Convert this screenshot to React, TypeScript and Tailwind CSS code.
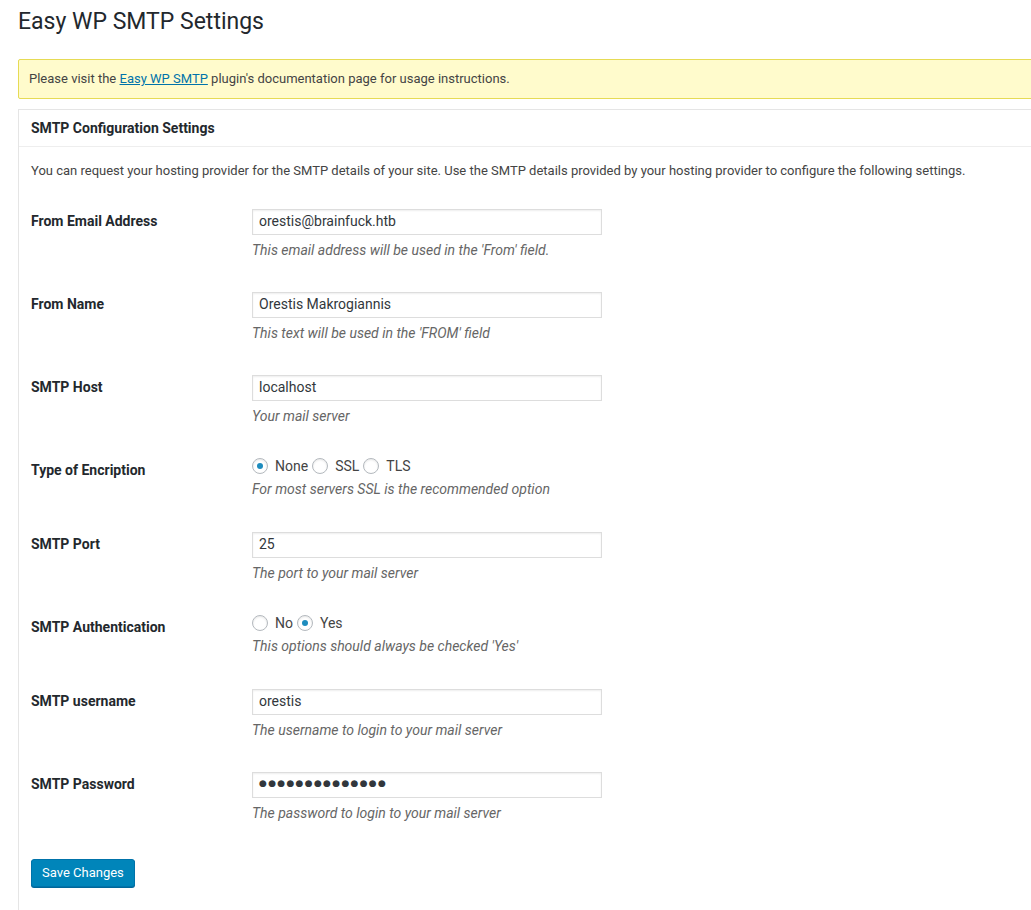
import React from "react";

type Field =
  | { kind: "text"; label: string; value: string; help: string; password?: boolean }
  | { kind: "radio"; label: string; options: string[]; checked: string; help: string };

const fields: Field[] = [
  { kind: "text", label: "From Email Address", value: "orestis@brainfuck.htb", help: "This email address will be used in the 'From' field." },
  { kind: "text", label: "From Name", value: "Orestis Makrogiannis", help: "This text will be used in the 'FROM' field" },
  { kind: "text", label: "SMTP Host", value: "localhost", help: "Your mail server" },
  { kind: "radio", label: "Type of Encription", options: ["None", "SSL", "TLS"], checked: "None", help: "For most servers SSL is the recommended option" },
  { kind: "text", label: "SMTP Port", value: "25", help: "The port to your mail server" },
  { kind: "radio", label: "SMTP Authentication", options: ["No", "Yes"], checked: "Yes", help: "This options should always be checked 'Yes'" },
  { kind: "text", label: "SMTP username", value: "orestis", help: "The username to login to your mail server" },
  { kind: "text", label: "SMTP Password", value: "●●●●●●●●●●●●●●", help: "The password to login to your mail server", password: true },
];

function Radio({ on }: { on: boolean }) {
  return (
    <span className="flex h-4 w-4 shrink-0 items-center justify-center rounded-full border border-[#b4b9be] bg-white shadow-[inset_0_1px_2px_rgba(0,0,0,0.1)]">
      {on && <span className="h-[6px] w-[6px] rounded-full bg-[#1e8cbe]" />}
    </span>
  );
}

function Row({ field }: { field: Field }) {
  const tall = field.kind === "text";
  return (
    <div className={`flex ${tall ? "h-[83px]" : "h-[74px]"}`}>
      <div className="w-[221px] shrink-0 pt-[17px] text-[14px] font-bold leading-[18px] text-[#23282d]">
        {field.label}
      </div>
      <div className="pt-[14px]">
        {field.kind === "text" ? (
          <div
            className={`flex h-[26px] w-[350px] items-center border border-[#ddd] bg-white pb-[2px] pl-[6px] shadow-[inset_0_1px_2px_rgba(0,0,0,0.07)] ${
              field.password
                ? "font-['DejaVu_Sans',sans-serif] text-[9px] tracking-[1.3px] text-[#32373c]"
                : "text-[14px] text-[#32373c]"
            }`}
          >
            {field.value}
          </div>
        ) : (
          <div className="flex h-4 items-center text-[14px] text-[#444]">
            {field.options.map((o) => (
              <span key={o} className="mr-[4px] flex items-center">
                <Radio on={o === field.checked} />
                <span className="ml-[7px]">{o}</span>
              </span>
            ))}
          </div>
        )}
        <p className="mt-[6px] text-[14px] italic leading-[18px] text-[#666]">{field.help}</p>
      </div>
    </div>
  );
}

export default function App() {
  return (
    <div className="min-h-[910px] w-[1031px] overflow-hidden bg-white font-['Roboto',sans-serif] text-[13px] text-[#444]">
      <div className="w-[1060px] pl-[18px]">
        <h1 className="pt-[7px] text-[23px] font-normal leading-[30px] text-[#23282d]">
          Easy WP SMTP Settings
        </h1>

        <div className="mt-[22px] flex h-[40px] items-center rounded-[2px] border border-[#e6db55] bg-[#fffbcc] pl-[10px]">
          <p>
            Please visit the{" "}
            <a href="#" className="text-[#0073aa] underline">
              Easy WP SMTP
            </a>{" "}
            plugin's documentation page for usage instructions.
          </p>
        </div>

        <div className="mt-[10px] border border-[#e5e5e5] bg-white">
          <div className="flex h-[37px] items-center border-b border-[#eee] pl-[12px]">
            <h3 className="text-[14px] font-bold text-[#23282d]">SMTP Configuration Settings</h3>
          </div>
          <div className="px-[12px]">
            <p className="mt-[15px] leading-[18px]">
              You can request your hosting provider for the SMTP details of your site. Use the SMTP details provided by
              your hosting provider to configure the following settings.
            </p>
            <div className="mt-[15px]">
              {fields.map((f) => (
                <Row key={f.label} field={f} />
              ))}
            </div>
            <div className="pt-[18px] pb-[30px]">
              <button className="h-[28px] rounded-[3px] border border-[#0073aa] bg-[#0085ba] px-[10px] text-[13px] text-white shadow-[0_1px_0_#006799]">
                Save Changes
              </button>
            </div>
          </div>
        </div>
      </div>
    </div>
  );
}
